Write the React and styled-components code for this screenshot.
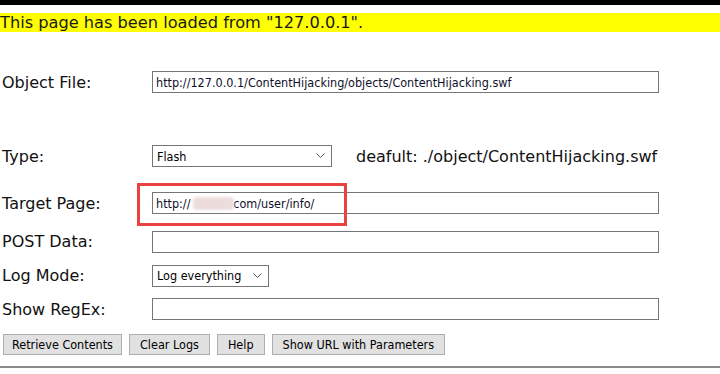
import React from 'react';
import styled, {createGlobalStyle} from 'styled-components';

const GlobalStyle = createGlobalStyle`
	html, body {
		margin: 0;
		padding: 0;
		background: #ffffff;
	}
	body {
		font-family: "DejaVu Sans", Verdana, sans-serif;
		color: #000;
	}
`;

const Page = styled.div`
	width: 720px;
	height: 374px;
	overflow: hidden;
	background: #fff;
`;
const TopBar = styled.div`
	height: 5px;
	background: #000;
`;
const Banner = styled.div`
	margin-top: 8px;
	height: 19px;
	line-height: 19px;
	background: #ffff00;
	font-size: 16.2px;
	color: #1a1a1a;
	white-space: nowrap;
`;
const Form = styled.div`
	display: flex;
	flex-direction: column;
`;
const Row = styled.div`
	display: grid;
	grid-template-columns: 152px 1fr;
	align-items: center;
	height: ${p => p.h}px;
	margin-top: ${p => p.mt || 0}px;
`;
const Label = styled.label`
	padding-left: 2px;
	font-size: 16px;
	color: #111;
`;
const Field = styled.div`
	position: relative;
	display: flex;
	align-items: center;
	gap: 24px;
`;
const Input = styled.input`
	box-sizing: border-box;
	width: 507px;
	height: 22px;
	margin: 0;
	padding: 0 3px;
	border: 1px solid #767676;
	border-radius: 0;
	background: #fff;
	font-family: "DejaVu Sans Condensed", "DejaVu Sans", sans-serif;
	font-size: 12.5px;
	color: #10102a;
	outline: none;
`;
const SelectWrap = styled.div`
	position: relative;
	width: ${p => p.w}px;
	height: 22px;
`;
const Select = styled.select`
	appearance: none;
	box-sizing: border-box;
	width: 100%;
	height: 100%;
	margin: 0;
	padding: 0 4px;
	border: 1px solid #767676;
	border-radius: 0;
	background: #fff;
	font-family: "DejaVu Sans Condensed", "DejaVu Sans", sans-serif;
	font-size: 12.5px;
	color: #000;
	outline: none;
`;
const Chevron = styled.svg`
	position: absolute;
	right: 7px;
	top: 8px;
	width: 9px;
	height: 5px;
	pointer-events: none;
`;
const Note = styled.span`
	font-size: 16px;
	color: #111;
	white-space: nowrap;
`;
const Highlight = styled.div`
	position: absolute;
	left: -15px;
	top: -9px;
	width: 204px;
	height: 37px;
	border: 3px solid #ea4141;
	pointer-events: none;
`;
const Redacted = styled.div`
	position: absolute;
	left: 41px;
	top: 5px;
	width: 41px;
	height: 13px;
	border-radius: 4px;
	background: #ecdcdc;
	filter: blur(1.5px);
	pointer-events: none;
`;
const Buttons = styled.div`
	display: flex;
	gap: 7px;
	padding-left: 3px;
	align-items: center;
	height: ${p => p.h}px;
`;
const Button = styled.button`
	box-sizing: border-box;
	height: 21px;
	padding: 0 ${p => p.pad || 9}px;
	margin: 0;
	border: 1px solid #adadad;
	border-radius: 0;
	background: #e1e1e1;
	font-family: "DejaVu Sans Condensed", "DejaVu Sans", sans-serif;
	font-size: 12.5px;
	color: #000;
`;
const Rule = styled.hr`
	margin: 0;
	border: 0;
	height: 2px;
	background: #8a8a8a;
`;

const Dropdown = ({w, value, options}) => (
	<SelectWrap w={w}>
		<Select defaultValue={value}>
			{options.map(o => <option key={o}>{o}</option>)}
		</Select>
		<Chevron viewBox="0 0 9 5">
			<path d="M0.5 0.5 L4.5 4.5 L8.5 0.5" fill="none" stroke="#555" strokeWidth="1" />
		</Chevron>
	</SelectWrap>
);

export default function App() {
	return (
		<Page>
			<GlobalStyle />
			<TopBar />
			<Banner>This page has been loaded from "127.0.0.1".</Banner>
			<Form>
				<Row h={44} mt={28}>
					<Label>Object File:</Label>
					<Field><Input defaultValue="http://127.0.0.1/ContentHijacking/objects/ContentHijacking.swf" /></Field>
				</Row>
				<Row h={44} mt={30}>
					<Label>Type:</Label>
					<Field>
						<Dropdown w={180} value="Flash" options={['Flash', 'PDF', 'Silverlight']} />
						<Note>deafult: ./object/ContentHijacking.swf</Note>
					</Field>
				</Row>
				<Row h={50}>
					<Label>Target Page:</Label>
					<Field>
						<Input defaultValue={'http://            com/user/info/'} />
						<Redacted />
						<Highlight />
					</Field>
				</Row>
				<Row h={27}>
					<Label>POST Data:</Label>
					<Field><Input /></Field>
				</Row>
				<Row h={41}>
					<Label>Log Mode:</Label>
					<Field><Dropdown w={117} value="Log everything" options={['Log everything', 'Log errors']} /></Field>
				</Row>
				<Row h={26}>
					<Label>Show RegEx:</Label>
					<Field><Input /></Field>
				</Row>
				<Buttons h={44}>
					<Button pad={8}>Retrieve Contents</Button>
					<Button pad={10}>Clear Logs</Button>
					<Button pad={10}>Help</Button>
					<Button pad={10}>Show URL with Parameters</Button>
				</Buttons>
				<Rule />
			</Form>
		</Page>
	);
}
